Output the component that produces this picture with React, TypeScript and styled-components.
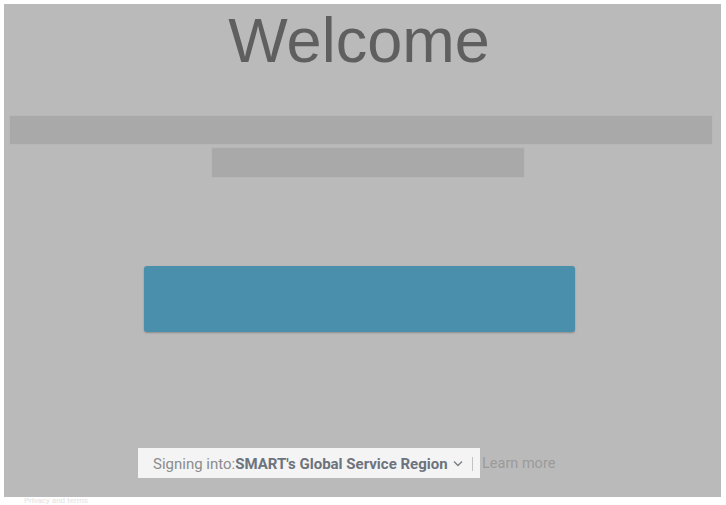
import React from 'react';
import styled, { createGlobalStyle } from 'styled-components';

const GlobalStyle = createGlobalStyle`
  html, body {
    margin: 0;
    padding: 0;
    background: #ffffff;
    overflow: hidden;
  }
  body {
    font-family: Roboto, "Liberation Sans", Arial, sans-serif;
  }
`;

const Page = styled.div`
  width: 726px;
  height: 505px;
  padding: 4px 5px 0 4px;
  box-sizing: border-box;
`;

const Overlay = styled.div`
  height: 493px;
  background: #bababa;
  display: flex;
  flex-direction: column;
  align-items: flex-start;
  padding-top: 5px;
  box-sizing: border-box;
`;

const Title = styled.h1`
  align-self: stretch;
  margin: 0 0 0 -7px;
  text-align: center;
  font-family: "Liberation Sans", Arial, sans-serif;
  font-weight: 400;
  font-size: 63px;
  line-height: 63px;
  color: #5f5f5f;
`;

const Placeholder = styled.div<{ $left: number; $width: number; $height: number; $top: number }>`
  margin-top: ${(p) => p.$top}px;
  margin-left: ${(p) => p.$left}px;
  width: ${(p) => p.$width}px;
  height: ${(p) => p.$height}px;
  background: #a9a9a9;
  box-shadow: 0 0 1px rgba(0, 0, 0, 0.08);
`;

const PrimaryButton = styled.button`
  margin-top: 89px;
  margin-left: 140px;
  width: 431px;
  height: 66px;
  border: none;
  border-radius: 3px;
  background: #4a8fab;
  box-shadow: 0 1px 2px rgba(0, 0, 0, 0.25);
  cursor: pointer;
`;

const Footer = styled.div`
  margin-top: 116px;
  margin-left: 134px;
  display: flex;
  align-items: center;
  font-size: 15px;
`;

const RegionBox = styled.div`
  width: 342px;
  height: 30px;
  box-sizing: border-box;
  padding: 1px 0 0 15px;
  background: #f4f4f4;
  display: flex;
  align-items: center;
  white-space: nowrap;
`;

const Label = styled.span`
  color: #8c8c8c;
`;

const Region = styled.span`
  color: #6c737d;
  font-weight: 700;
`;

const Chevron = styled.svg`
  margin-left: 5px;
  width: 10px;
  height: 7px;
  color: #7a7f86;
`;

const Divider = styled.span`
  margin-left: 9px;
  width: 1px;
  height: 14px;
  background: #c2c2c2;
`;

const LearnMore = styled.a`
  margin-left: 2px;
  color: #9b9b9b;
  font-size: 14.5px;
  text-decoration: none;
`;

const BottomNote = styled.div`
  margin: 0 0 0 20px;
  font-size: 8px;
  line-height: 8px;
  color: #e2e2e2;
  white-space: nowrap;
`;

const App: React.FC = () => (
  <>
    <GlobalStyle />
    <Page>
      <Overlay>
        <Title>Welcome</Title>
        <Placeholder $top={44} $left={6} $width={702} $height={28} />
        <Placeholder $top={4} $left={208} $width={312} $height={29} />
        <PrimaryButton aria-label="Continue" />
        <Footer>
          <RegionBox>
            <Label>Signing into:</Label>
            <Region>SMART's Global Service Region</Region>
            <Chevron viewBox="0 0 10 7" fill="none">
              <path d="M1 1.5l4 4 4-4" stroke="currentColor" strokeWidth="1.4" />
            </Chevron>
            <Divider />
          </RegionBox>
          <LearnMore href="#">Learn more</LearnMore>
        </Footer>
      </Overlay>
      <BottomNote>Privacy and terms</BottomNote>
    </Page>
  </>
);

export default App;
